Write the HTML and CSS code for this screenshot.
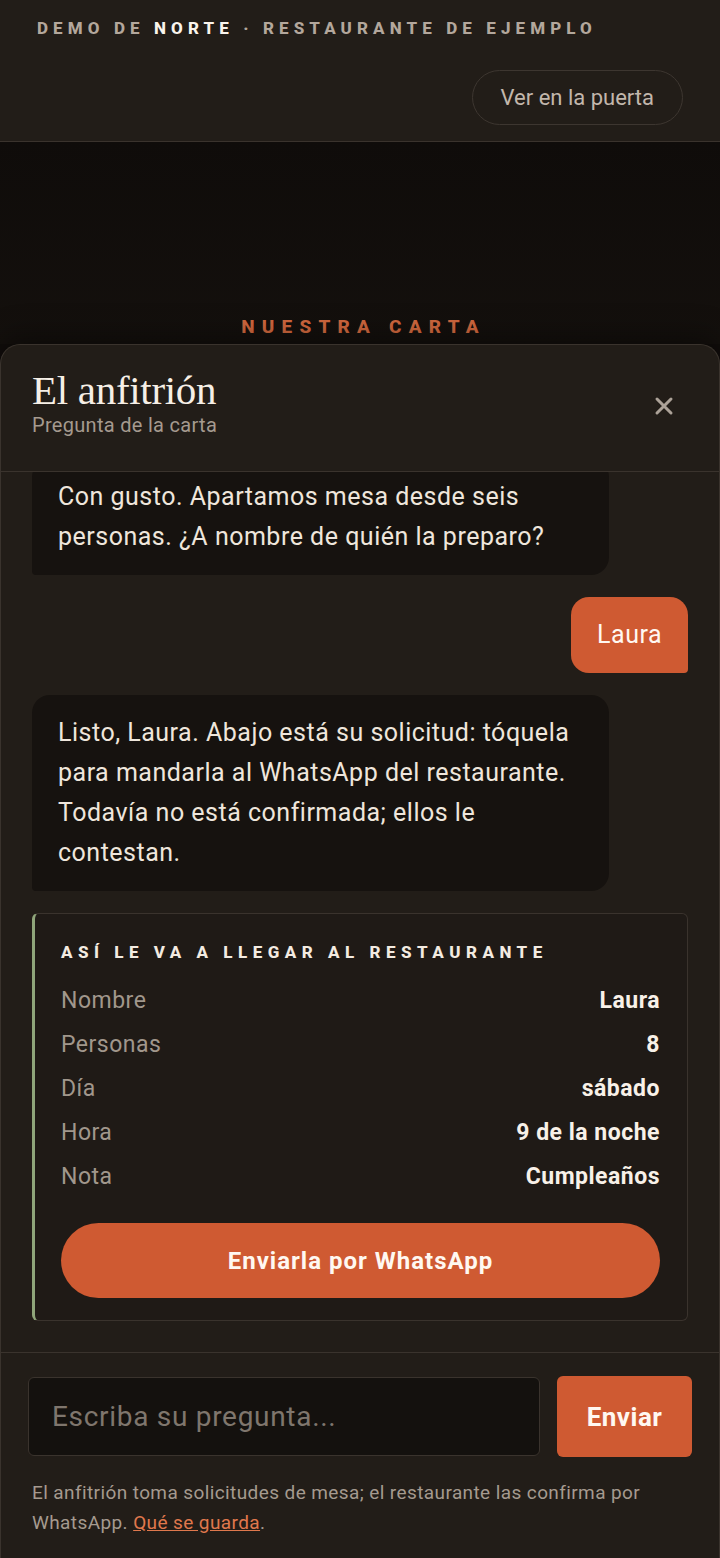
FILE: index.html
```html
<!DOCTYPE html>
<html lang="es">
<head>
    <meta charset="UTF-8">
    <meta name="viewport" content="width=device-width, initial-scale=1.0">
    <title>Norte · El anfitrión</title>
    <link rel="stylesheet" href="styles.css">
</head>
<body>
    <header class="topbar">
        <p class="brand">DEMO DE <strong>NORTE</strong> · RESTAURANTE DE EJEMPLO</p>
        <div class="topbar-actions">
            <a class="pill" href="#">Ver en la puerta</a>
        </div>
    </header>

    <section class="hero">
        <p class="eyebrow">NUESTRA CARTA</p>
    </section>

    <aside class="chat">
        <div class="chat-head">
            <div>
                <h1>El anfitrión</h1>
                <p class="chat-sub">Pregunta de la carta</p>
            </div>
            <button class="close" aria-label="Cerrar">
                <svg width="20" height="20" viewBox="0 0 20 20">
                    <path d="M3 3 L17 17 M17 3 L3 17" stroke="#aca298" stroke-width="3" stroke-linecap="round"/>
                </svg>
            </button>
        </div>

        <div class="messages">
            <div class="msg bot">Con gusto. Apartamos mesa desde seis personas. ¿A nombre de quién la preparo?</div>
            <div class="msg user">Laura</div>
            <div class="msg bot">Listo, Laura. Abajo está su solicitud: tóquela para mandarla al WhatsApp del restaurante. Todavía no está confirmada; ellos le contestan.</div>

            <div class="summary">
                <h2>ASÍ LE VA A LLEGAR AL RESTAURANTE</h2>
                <dl>
                    <div class="row"><dt>Nombre</dt><dd>Laura</dd></div>
                    <div class="row"><dt>Personas</dt><dd>8</dd></div>
                    <div class="row"><dt>Día</dt><dd>sábado</dd></div>
                    <div class="row"><dt>Hora</dt><dd>9 de la noche</dd></div>
                    <div class="row"><dt>Nota</dt><dd>Cumpleaños</dd></div>
                </dl>
                <button class="whatsapp">Enviarla por WhatsApp</button>
            </div>
        </div>

        <div class="chat-foot">
            <form class="ask" onsubmit="return false">
                <input type="text" placeholder="Escriba su pregunta...">
                <button type="submit">Enviar</button>
            </form>
            <p class="note">El anfitrión toma solicitudes de mesa; el restaurante las confirma por WhatsApp. <a href="#">Qué se guarda</a>.</p>
        </div>
    </aside>
</body>
</html>
```

FILE: styles.css
```css
body {
    margin: 0;
    background-color: #110d0b;
    color: #efe6dc;
    font-family: Roboto, "Liberation Sans", sans-serif;
}
.topbar {
    background-color: #221d18;
    padding: 18px 37px 16px;
    border-bottom: 1px solid #3a332d;
}
.brand {
    margin: 0;
    font-size: 17px;
    line-height: 20px;
    font-weight: 800;
    letter-spacing: 5.1px;
    color: #b3a79c;
}
.brand strong {
    font-weight: 800;
    color: #faf4ec;
}
.topbar-actions {
    display: flex;
    justify-content: flex-end;
    margin-top: 32px;
}
.pill {
    display: flex;
    align-items: center;
    height: 53px;
    padding: 0 28px;
    border: 1px solid #3d3630;
    border-radius: 28px;
    color: #c2b7ac;
    font-size: 22px;
    text-decoration: none;
}
.hero {
    height: 202px;
    display: flex;
    align-items: flex-end;
    justify-content: center;
    background: linear-gradient(#0f0c0a, #14100d);
}
.eyebrow {
    margin: 0 0 6px 7px;
    color: #d4693f;
    font-size: 19px;
    font-weight: 800;
    letter-spacing: 7.2px;
}
.chat {
    background-color: #221d18;
    border: 1px solid #3a332d;
    border-bottom: none;
    border-radius: 20px 20px 0 0;
    box-shadow: 0 -8px 30px rgba(0, 0, 0, 0.4);
    position: relative;
}
.chat-head {
    display: flex;
    justify-content: space-between;
    align-items: center;
    padding: 22px 35px 34px 31px;
    border-bottom: 1px solid #3a332d;
}
.chat-head h1 {
    margin: 0;
    font-family: "Liberation Serif", "DejaVu Serif", serif;
    font-weight: normal;
    font-size: 41px;
    line-height: 46px;
    letter-spacing: -0.3px;
    color: #f6efe6;
}
.chat-sub {
    margin: 0;
    font-size: 20px;
    line-height: 24px;
    letter-spacing: 0.3px;
    color: #a59a8f;
}
.close {
    width: 40px;
    height: 40px;
    margin-top: 8px;
    background: none;
    border: none;
    display: flex;
    align-items: center;
    justify-content: center;
    cursor: pointer;
}
.messages {
    height: 849px;
    overflow: hidden;
    display: flex;
    flex-direction: column;
    justify-content: flex-end;
    gap: 22px;
    padding: 0 31px 31px;
}
.msg {
    flex-shrink: 0;
    font-size: 25px;
    line-height: 40px;
    letter-spacing: 0.5px;
    padding: 18px 26px;
}
.bot {
    align-self: flex-start;
    max-width: 525px;
    background-color: #16120f;
    border-radius: 18px 18px 18px 4px;
}
.user {
    align-self: flex-end;
    background-color: #cf5a32;
    color: #fff8f1;
    border-radius: 18px 18px 4px 18px;
}
.summary {
    flex-shrink: 0;
    border: 1px solid #3a332d;
    border-left: 3px solid #8fa57a;
    border-radius: 6px;
    padding: 27px 27px 22px 26px;
    background-color: #1f1a16;
}
.summary h2 {
    margin: 0;
    font-size: 17px;
    line-height: 22px;
    font-weight: 800;
    letter-spacing: 5.5px;
    color: #f3ebe1;
}
.summary dl {
    margin: 16px 0 0;
}
.row {
    display: flex;
    justify-content: space-between;
    font-size: 23px;
    line-height: 44px;
    letter-spacing: 0.5px;
}
.row dt {
    color: #a1978c;
}
.row dd {
    margin: 0;
    font-weight: bold;
    color: #f8f1e8;
}
.whatsapp {
    display: block;
    width: 100%;
    height: 75px;
    margin-top: 24px;
    background-color: #cf5a32;
    color: #fff8f1;
    border: none;
    border-radius: 38px;
    font-family: inherit;
    font-size: 24px;
    font-weight: bold;
    letter-spacing: 1px;
    cursor: pointer;
}
.chat-foot {
    border-top: 1px solid #3a332d;
    padding: 23px 27px 20px;
}
.ask {
    display: flex;
    gap: 17px;
    align-items: center;
}
.ask input {
    flex: 1;
    min-width: 0;
    height: 77px;
    padding: 0 23px;
    background-color: #14110e;
    border: 1px solid #3a332d;
    border-radius: 6px;
    color: #efe6dc;
    font-family: inherit;
    font-size: 28px;
    letter-spacing: 0.7px;
}
.ask input::placeholder {
    color: #7f766d;
}
.ask button {
    width: 135px;
    height: 81px;
    background-color: #cf5a32;
    color: #fff8f1;
    border: none;
    border-radius: 6px;
    font-family: inherit;
    font-size: 26px;
    font-weight: bold;
    letter-spacing: 0.5px;
    cursor: pointer;
}
.note {
    margin: 21px 0 0 4px;
    font-size: 19px;
    line-height: 30px;
    letter-spacing: 0.4px;
    color: #a59a8f;
}
.note a {
    color: #e0784d;
}
```
